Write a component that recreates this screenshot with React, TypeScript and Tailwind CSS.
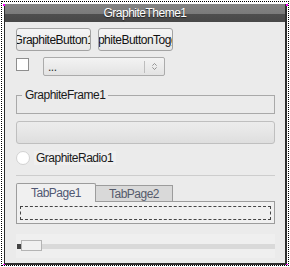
import { ChevronsUpDown } from "lucide-react"

export default function App() {
  return (
    <div className="relative w-[290px] h-[267px] bg-white pl-[1px] pt-[1px] font-['Liberation_Sans',Arial,sans-serif] text-[12px] tracking-[-0.5px] leading-[14px]">
      <div className="w-[288px] h-[265px] border border-dotted border-black pl-[2px] pt-[2px]">
        {/* Form */}
        <div className="flex flex-col w-[283px] h-[261px] border-l border-r-2 border-b-2 border-[#2e2e2e] bg-[#ebebeb]">
          {/* Title bar */}
          <div className="h-[18px] flex items-center justify-center text-white text-[12px] [text-shadow:0_1px_1px_#222] bg-[linear-gradient(to_bottom,#858585_0px,#7a7a7a_10px,#4e4e4e_10px,#484848_18px)]">
            GraphiteTheme1
          </div>

          <div className="flex flex-col pl-[11px] w-[270px]">
            {/* Buttons */}
            <div className="mt-[6px] flex gap-[7px]">
              <div className="w-[75px] h-[23px] flex items-center justify-center overflow-hidden whitespace-nowrap rounded-[3px] border border-[#a3a3a3] bg-[linear-gradient(to_bottom,#f5f5f5,#e6e6e6)] text-[#111]">
                GraphiteButton1
              </div>
              <div className="w-[75px] h-[23px] flex items-center justify-center overflow-hidden whitespace-nowrap rounded-[3px] border border-[#a3a3a3] bg-[linear-gradient(to_bottom,#f5f5f5,#e6e6e6)] text-[#111]">
                GraphiteButtonToggle1
              </div>
            </div>

            {/* Checkbox + combo */}
            <div className="mt-[6px] flex items-start gap-[14px]">
              <div className="mt-[1px] w-[13px] h-[13px] border border-[#8e8e8e] bg-white" />
              <div className="w-[122px] h-[19px] flex items-center rounded-[2px] border border-[#ababab] bg-[linear-gradient(to_bottom,#f3f3f3,#e3e3e3)]">
                <span className="flex-1 pl-[4px] text-[#333] leading-[12px]">...</span>
                <div className="w-px h-[12px] bg-[#bdbdbd]" />
                <div className="w-[19px] flex items-center justify-center text-[#777]">
                  <ChevronsUpDown size={9} strokeWidth={2} />
                </div>
              </div>
            </div>

            {/* Frame */}
            <div className="relative mt-[19px] w-[259px] h-[19px] border border-[#a9a9a9]">
              <span className="absolute left-[5px] -top-[8px] px-[3px] bg-[#ebebeb] text-[#1a1a1a] leading-[14px]">
                GraphiteFrame1
              </span>
            </div>

            {/* Progress-like bar */}
            <div className="mt-[7px] w-[259px] h-[23px] rounded-[3px] border border-[#bfbfbf] bg-[linear-gradient(to_bottom,#ececec,#e6e6e6_50%,#dedede)]" />

            {/* Radio */}
            <div className="mt-[7px] h-[14px] flex items-center gap-[4px]">
              <div className="w-[14px] h-[14px] rounded-full border border-[#d2d2d2] bg-white" />
              <span className="bg-[#efefef] pl-[2px] pr-[3px] text-[#1a1a1a]">GraphiteRadio1</span>
            </div>

            {/* Separator */}
            <div className="mt-[10px] w-[259px] h-px bg-[#cdcdcd]" />

            {/* Tabs */}
            <div className="mt-[7px] flex items-end h-[18px] relative z-10">
              <div className="w-[80px] h-[19px] -mb-px flex items-center justify-center rounded-t-[2px] border border-b-0 border-[#9c9c9c] bg-[#f0f0f0] text-[#505873]">
                TabPage1
              </div>
              <div className="w-[77px] h-[16px] flex items-center justify-center border border-l-0 border-b-0 border-[#9c9c9c] bg-[#d9d9d9] text-[#555b6b]">
                TabPage2
              </div>
            </div>
            <div className="w-[259px] h-[23px] border border-[#9c9c9c] bg-[#f0f0f0] pl-[3px] pr-[3px] pt-[4px]">
              <div className="h-[14px] border border-dashed border-[#444]" />
            </div>

            {/* Trackbar */}
            <div className="relative mt-[10px] w-[259px] h-[24px] bg-[#efefef]">
              <div className="absolute left-[1px] top-[10px] w-[4px] h-[5px] bg-[#444]" />
              <div className="ml-[5px] mt-[10px] h-[5px] bg-[#d9d9d9]" />
              <div className="absolute left-[5px] top-[6px] w-[21px] h-[11px] border border-[#b4b4b4] bg-[#f0f0f0]" />
            </div>
          </div>
        </div>
      </div>

      {/* Designer corner markers */}
      <div className="absolute left-[3px] top-[4px] w-[2px] h-[2px] bg-[#ff00ff]" />
      <div className="absolute left-[286px] top-[4px] w-[2px] h-[2px] bg-[#ff00ff]" />
      <div className="absolute left-[3px] top-[264px] w-[2px] h-[1px] bg-[#ff00ff]" />
      <div className="absolute left-[286px] top-[264px] w-[2px] h-[1px] bg-[#ff00ff]" />
    </div>
  )
}
